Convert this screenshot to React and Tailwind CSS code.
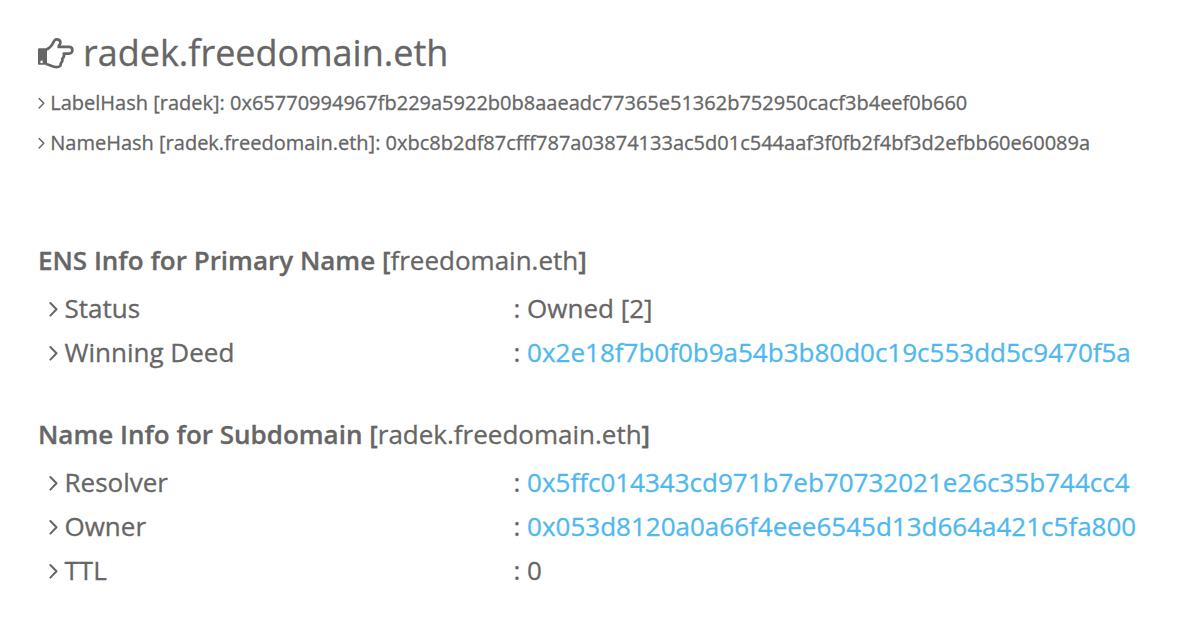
function HandRight() {
  return (
    <svg viewBox="0 0 38 34" className="mt-[3px] h-[34px] w-[38px] shrink-0" fill="none">
      <path d="M1.4 11.2 H9 V27.8 H1.4 Q-0.4 27.8 -0.4 26 V13 Q-0.4 11.2 1.4 11.2 Z M3.6 23.6 A1.3 1.3 0 1 0 3.6 26.2 A1.3 1.3 0 1 0 3.6 23.6 Z" fill="currentColor" fillRule="evenodd" className="overflow-visible" />
      <path d="M8 12.5 C10.5 12.3 12.3 9.9 14 7.8 C15.6 5.8 15.8 2.3 18.4 2.3 C21.2 2.3 22.4 3.6 22.4 5.6 C22.4 7.8 20.6 8.2 20.6 9.9 H31 C33.2 9.9 34.4 11.4 34.4 13.2 C34.4 15 33 16.6 31 16.6 H25.8 C26.4 18.6 25.5 20.8 24.3 21.8 C24.7 23.6 24 25.2 22.8 26.2 C22.9 29.2 21.4 30.1 18.5 30.1 C14.3 30.1 11.2 27.2 8 27.1" stroke="currentColor" strokeWidth="2.7" strokeLinejoin="round" />
    </svg>
  );
}

function Angle({ size }) {
  return (
    <svg viewBox="0 0 9 16" className={size === "sm" ? "h-[12px] w-[7px]" : "h-[16px] w-[9px]"} fill="none" stroke="currentColor" strokeWidth="2" strokeLinecap="round" strokeLinejoin="round">
      <path d="M1.4 2 L7.5 8.3 L1.4 14.6" />
    </svg>
  );
}

function Hash({ label, value }) {
  return (
    <div className="flex h-[40px] items-center gap-[5.3px] text-[20px]">
      <Angle size="sm" />
      <span>{label}: {value}</span>
    </div>
  );
}

function Row({ label, value, link }) {
  return (
    <div className="flex h-[44px] items-center pl-[10.5px]">
      <div className="flex w-[465px] items-center gap-[7px]">
        <span className="mt-[2px]"><Angle /></span>
        <span>{label}</span>
      </div>
      <span>: <span className={link ? "text-[#4fb8ee]" : ""}>{value}</span></span>
    </div>
  );
}

function Section({ title, name, children }) {
  return (
    <section className="h-[174px] text-[26px] leading-[40px]">
      <h2 className="mb-[6px]"><span className="font-semibold">{title} [</span>{name}<span className="font-semibold">]</span></h2>
      {children}
    </section>
  );
}

export default function App() {
  return (
    <main className="h-[620px] w-[1178px] overflow-hidden whitespace-nowrap bg-white pl-[38px] pt-[22px] font-['Open_Sans',sans-serif] text-[#666666] [-webkit-text-stroke:0.3px]">
      <h1 className="flex h-[61px] items-center gap-[7px] text-[36px]">
        <HandRight />
        <span>radek.freedomain.eth</span>
      </h1>
      <Hash label="LabelHash [radek]" value="0x65770994967fb229a5922b0b8aaeadc77365e51362b752950cacf3b4eef0b660" />
      <Hash label="NameHash [radek.freedomain.eth]" value="0xbc8b2df87cfff787a03874133ac5d01c544aaf3f0fb2f4bf3d2efbb60e60089a" />
      <div className="h-[77px]" />
      <Section title="ENS Info for Primary Name" name="freedomain.eth">
        <Row label="Status" value="Owned [2]" />
        <Row label="Winning Deed" value="0x2e18f7b0f0b9a54b3b80d0c19c553dd5c9470f5a" link />
      </Section>
      <Section title="Name Info for Subdomain" name="radek.freedomain.eth">
        <Row label="Resolver" value="0x5ffc014343cd971b7eb70732021e26c35b744cc4" link />
        <Row label="Owner" value="0x053d8120a0a66f4eee6545d13d664a421c5fa800" link />
        <Row label="TTL" value="0" />
      </Section>
    </main>
  );
}
